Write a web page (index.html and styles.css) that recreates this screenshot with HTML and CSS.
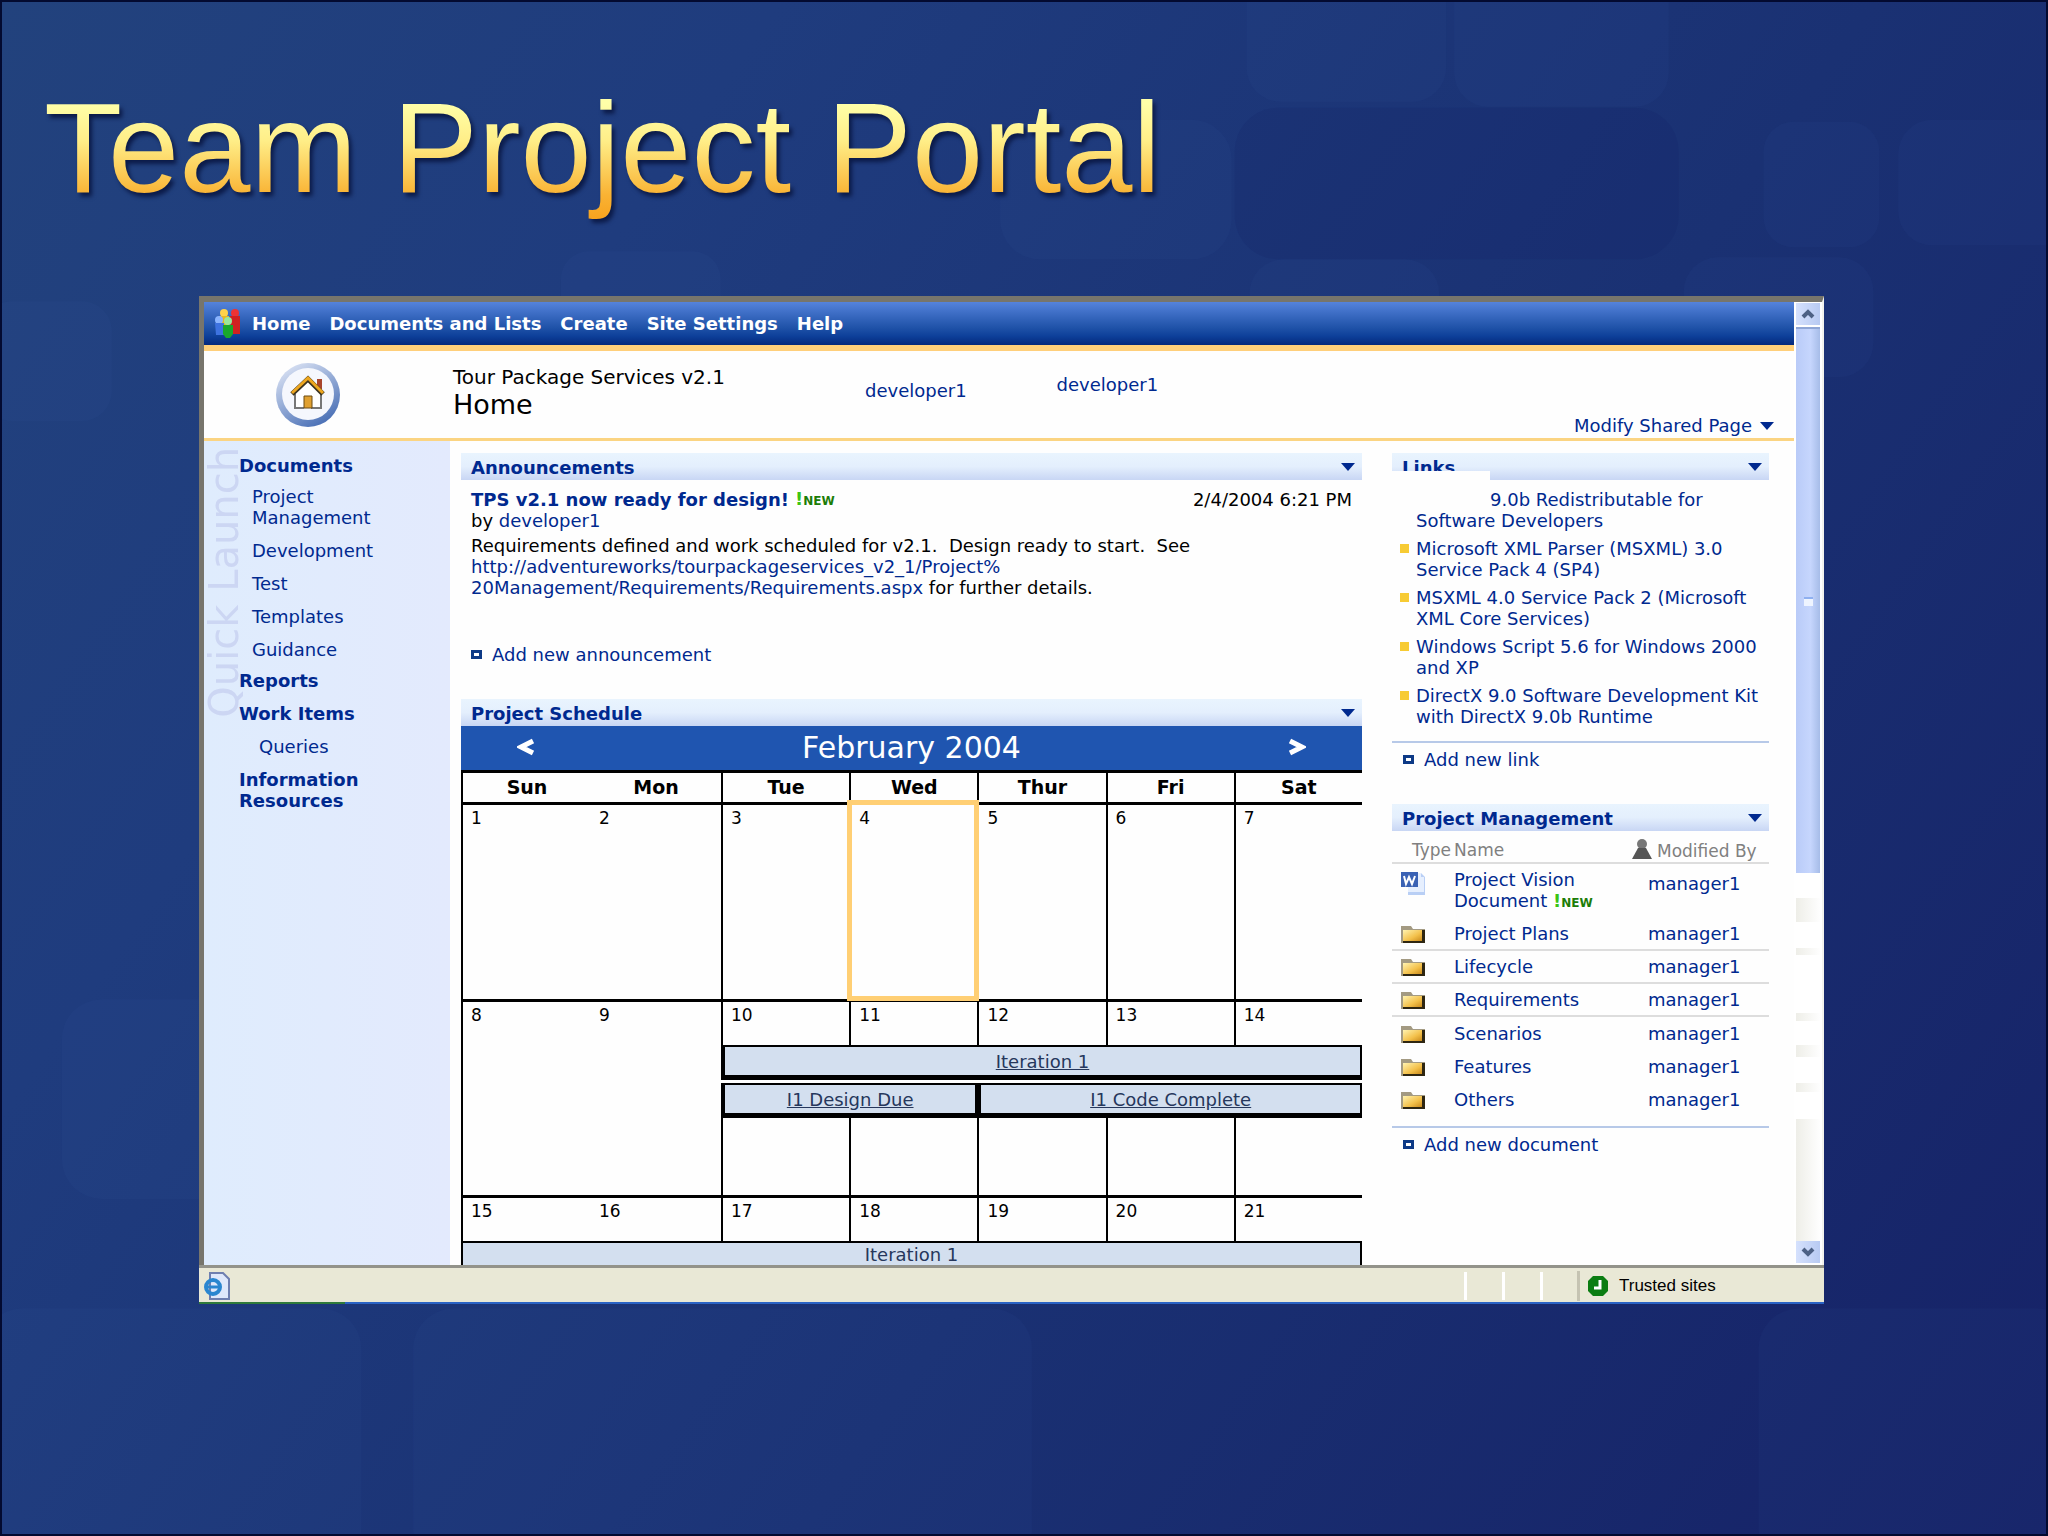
FILE: index.html
```html
<!DOCTYPE html>
<html lang="en">
<head>
<meta charset="utf-8">
<title>Team Project Portal</title>
<link rel="stylesheet" href="styles.css">
</head>
<body>
<svg width="0" height="0" class="defs" aria-hidden="true">
  <defs>
    <linearGradient id="fold" x1="0" y1="0" x2="1" y2="1"><stop offset="0" stop-color="#fff3b0"/><stop offset=".6" stop-color="#f3c04a"/><stop offset="1" stop-color="#c98a1c"/></linearGradient>
    <symbol id="folder" viewBox="0 0 24 18">
      <path d="M0 1h10l2 3h12v14H0z" fill="#a39a82"/><path d="M24 5v13H2v-2h19V5z" fill="#2e2612"/><path d="M2 5h19v11H2z" fill="url(#fold)"/>
    </symbol>
  </defs>
</svg>
<svg class="backdrop" viewBox="0 0 2048 1536" preserveAspectRatio="none" aria-hidden="true">
  <g fill="#4a6fc0" fill-opacity=".05">
    <rect x="1247" y="-60" width="200" height="160" rx="34"/><rect x="1455" y="-60" width="215" height="165" rx="34"/>
    <rect x="1000" y="118" width="232" height="140" rx="40"/>
    <rect x="1765" y="120" width="116" height="126" rx="30"/><rect x="1900" y="118" width="190" height="126" rx="34"/>
    <rect x="560" y="250" width="160" height="90" rx="28"/><rect x="1250" y="258" width="190" height="120" rx="34"/>
    <rect x="1685" y="256" width="190" height="120" rx="34"/>
    <rect x="-20" y="300" width="130" height="120" rx="30"/><rect x="60" y="1000" width="180" height="200" rx="40"/>
    <rect x="-20" y="1310" width="380" height="260" rx="40"/><rect x="412" y="1310" width="620" height="260" rx="40"/>
    <rect x="1760" y="1310" width="320" height="260" rx="40"/>
  </g>
  <rect x="1235" y="106" width="445" height="152" rx="44" fill="#101f66" fill-opacity=".16"/>
</svg>
<main class="slide">
  <h1 class="title">Team Project Portal</h1>
  <section class="browser">
    <div class="viewport">
      <div class="page">
        <nav class="topnav">
          <svg class="people" viewBox="0 0 26 30"><circle cx="9" cy="5" r="4" fill="#ffd24a"/><circle cx="20" cy="5" r="4" fill="#e33"/><path d="M4 8h10v12H4z" fill="#e8b820"/><path d="M15 8h10v18h-9z" fill="#d02020"/><circle cx="4" cy="12" r="4" fill="#8ab4ff"/><path d="M0 15h9v12H1z" fill="#3d72e0"/><circle cx="13" cy="13" r="4" fill="#9be89b"/><path d="M8 17h10v9l-3 4h-4l-3-4z" fill="#19a82c"/></svg>
          <a href="#">Home</a><a href="#">Documents and Lists</a><a href="#">Create</a><a href="#">Site Settings</a><a href="#">Help</a>
        </nav>
        <header class="banner">
          <svg class="home" viewBox="0 0 66 66"><defs><linearGradient id="ring" x1="0" y1="0" x2=".6" y2="1"><stop offset="0" stop-color="#e9eefa"/><stop offset="1" stop-color="#4f74b8"/></linearGradient></defs><circle cx="33" cy="33" r="32" fill="url(#ring)"/><circle cx="33" cy="32" r="26" fill="#f5f7fd"/><path d="M42 17h5v10h-5z" fill="#a8442c"/><path d="M20 31 33 19l13 12v15H20z" fill="#fff"/><path d="M20 32v14h9M46 32v14H36" fill="none" stroke="#777" stroke-width="2"/><path d="M17 32 33 17l15 15" fill="none" stroke="#3d3420" stroke-width="5"/><path d="M17 31 33 16l15 15" fill="none" stroke="#eda61f" stroke-width="3"/><path d="M29 34h8v12h-8z" fill="#e0a030" stroke="#6b4a12"/></svg>
          <div class="site"><p class="sitename">Tour Package Services v2.1</p><h2 class="pagename">Home</h2></div>
          <a class="dev1" href="#">developer1</a><a class="dev2" href="#">developer1</a>
          <a class="modify" href="#">Modify Shared Page <i class="caret"></i></a>
        </header>
        <div class="columns">
          <aside class="side">
            <p class="quick">Quick Launch</p>
            <ul class="launch">
              <li class="top"><a href="#">Documents</a></li>
              <li class="sub first"><a href="#">Project<br>Management</a></li>
              <li class="sub"><a href="#">Development</a></li>
              <li class="sub"><a href="#">Test</a></li>
              <li class="sub"><a href="#">Templates</a></li>
              <li class="sub last"><a href="#">Guidance</a></li>
              <li class="top"><a href="#">Reports</a></li>
              <li class="top"><a href="#">Work Items</a></li>
              <li class="sub deep"><a href="#">Queries</a></li>
              <li class="top"><a href="#">Information<br>Resources</a></li>
            </ul>
          </aside>
          <div class="center">
            <section class="news">
              <h3 class="bar">Announcements <i class="caret"></i></h3>
              <div class="newsbody">
                <p class="headline"><a href="#">TPS v2.1 now ready for design!</a><span class="new"><b>!</b>NEW</span><time>2/4/2004 6:21 PM</time></p>
                <p class="by">by <a href="#">developer1</a></p>
                <p>Requirements defined and work scheduled for v2.1.&nbsp; Design ready to start.&nbsp; See<br><a href="#">http://adventureworks/tourpackageservices_v2_1/Project%<br>20Management/Requirements/Requirements.aspx</a> for further details.</p>
                <a class="add" href="#"><i class="plus"></i>Add new announcement</a>
              </div>
            </section>
            <section>
              <h3 class="bar">Project Schedule <i class="caret"></i></h3>
              <div class="month"><button type="button" aria-label="Previous month"><svg viewBox="0 0 18 18"><path d="M16 3 4 9l12 6" fill="none" stroke="#fff" stroke-width="5"/></svg></button><span>February 2004</span><button type="button" aria-label="Next month"><svg viewBox="0 0 18 18"><path d="M2 3 14 9 2 15" fill="none" stroke="#fff" stroke-width="5"/></svg></button></div>
              <table class="cal">
                <colgroup><col class="weekstart"><col class="weekstart"><col span="5"></colgroup>
                <thead><tr><th>Sun</th><th>Mon</th><th>Tue</th><th>Wed</th><th>Thur</th><th>Fri</th><th>Sat</th></tr></thead>
                <tbody>
                  <tr class="week tall"><td>1</td><td>2</td><td>3</td><td class="today">4</td><td>5</td><td>6</td><td>7</td></tr>
                  <tr class="week"><td>8</td><td>9</td><td>10</td><td>11</td><td>12</td><td>13</td><td>14</td></tr>
                  <tr class="events"><td></td><td></td><td colspan="5" class="ev"><a href="#">Iteration 1</a></td></tr>
                  <tr class="events second"><td></td><td></td><td colspan="2" class="ev"><a href="#">I1 Design Due</a></td><td colspan="3" class="ev"><a href="#">I1 Code Complete</a></td></tr>
                  <tr class="filler"><td></td><td></td><td></td><td></td><td></td><td></td><td></td></tr>
                  <tr class="week"><td>15</td><td>16</td><td>17</td><td>18</td><td>19</td><td>20</td><td>21</td></tr>
                  <tr class="events"><td colspan="7" class="ev whole"><a href="#">Iteration 1</a></td></tr>
                </tbody>
              </table>
            </section>
          </div>
          <div class="right">
            <section class="linkbox">
              <h3 class="bar notch">Links <i class="caret"></i></h3>
              <ul class="links">
                <li class="cut"><a href="#">9.0b Redistributable for<br>Software Developers</a></li>
                <li><a href="#">Microsoft XML Parser (MSXML) 3.0<br>Service Pack 4 (SP4)</a></li>
                <li><a href="#">MSXML 4.0 Service Pack 2 (Microsoft<br>XML Core Services)</a></li>
                <li><a href="#">Windows Script 5.6 for Windows 2000<br>and XP</a></li>
                <li><a href="#">DirectX 9.0 Software Development Kit<br>with DirectX 9.0b Runtime</a></li>
              </ul>
              <a class="add ruled" href="#"><i class="plus"></i>Add new link</a>
            </section>
            <section>
              <h3 class="bar">Project Management <i class="caret"></i></h3>
              <table class="docs">
                <thead><tr><th>Type</th><th>Name</th><th><svg class="person" viewBox="0 0 20 20"><circle cx="10" cy="5" r="5" fill="#777"/><path d="M6 9h8l6 11H0z" fill="#555"/></svg>Modified By</th></tr></thead>
                <tbody>
                  <tr class="doc"><td><svg viewBox="0 0 24 24"><path d="M7 1h13l4 4v18H7z" fill="#b9cff5"/><path d="M7 1h13v4h3v15H7z" fill="#e6effe"/><path d="M0 0h17v15H0z" fill="#3a62b4"/><path d="M3 4l2 8 3-7 3 7 3-8" fill="none" stroke="#fff" stroke-width="2"/></svg></td><td><a href="#">Project Vision<br>Document</a> <span class="new"><b>!</b>NEW</span></td><td><a href="#">manager1</a></td></tr>
                  <tr class="line"><td><svg><use href="#folder"/></svg></td><td><a href="#">Project Plans</a></td><td><a href="#">manager1</a></td></tr>
                  <tr class="line"><td><svg><use href="#folder"/></svg></td><td><a href="#">Lifecycle</a></td><td><a href="#">manager1</a></td></tr>
                  <tr class="line"><td><svg><use href="#folder"/></svg></td><td><a href="#">Requirements</a></td><td><a href="#">manager1</a></td></tr>
                  <tr><td><svg><use href="#folder"/></svg></td><td><a href="#">Scenarios</a></td><td><a href="#">manager1</a></td></tr>
                  <tr><td><svg><use href="#folder"/></svg></td><td><a href="#">Features</a></td><td><a href="#">manager1</a></td></tr>
                  <tr><td><svg><use href="#folder"/></svg></td><td><a href="#">Others</a></td><td><a href="#">manager1</a></td></tr>
                </tbody>
              </table>
              <a class="add ruled" href="#"><i class="plus"></i>Add new document</a>
            </section>
          </div>
        </div>
      </div>
      <div class="scroll">
        <button type="button" class="arrow" aria-label="Scroll up"><svg viewBox="0 0 14 10"><path d="M2 8 7 3l5 5" fill="none" stroke="#4d6185" stroke-width="4"/></svg></button>
        <div class="thumb"><i></i></div>
        <div class="track"></div>
        <button type="button" class="arrow" aria-label="Scroll down"><svg viewBox="0 0 14 10"><path d="M2 2l5 5 5-5" fill="none" stroke="#4d6185" stroke-width="4"/></svg></button>
      </div>
    </div>
    <footer class="status">
      <svg class="ie" viewBox="0 0 26 28"><path d="M6 1h13l6 6v20H6z" fill="#dfe8fb" stroke="#6f7fb0" stroke-width="2"/><circle cx="9" cy="15" r="7" fill="none" stroke="#2a86d0" stroke-width="4"/><path d="M4 15h11" stroke="#2a86d0" stroke-width="3"/></svg>
      <span class="panes"><i></i><i></i><i></i></span>
      <span class="zone"><svg viewBox="0 0 20 20"><path d="M5 0h10l5 5v10l-5 5H5l-5-5V5z" fill="#0b7d12"/><path d="M12 4v8H6" fill="none" stroke="#fff" stroke-width="3"/></svg>Trusted sites</span>
    </footer>
    <div class="edge"></div>
  </section>
</main>
</body>
</html>
```
FILE: styles.css
```css
* { box-sizing: border-box; }
body {
  margin: 0;
  font: 18px/21px "DejaVu Sans", Verdana, sans-serif;
  color: #000;
  background: linear-gradient(125deg, #22427d 0%, #1f3c7e 25%, #1a3173 60%, #162267 100%);
}
h1, h2, h3, p, ul { margin: 0; padding: 0; font-size: inherit; font-weight: normal; }
ul { list-style: none; }
a { color: #00298f; text-decoration: none; }
button { padding: 0; border: 0; background: none; }
svg { display: block; }
.defs { position: absolute; }
.backdrop { position: absolute; inset: 0; width: 100%; height: 100%; border: 2px solid #030a30; }

.slide {
  position: relative;
  display: flex;
  flex-direction: column;
  height: 100vh;
  padding: 74px 224px 232px 199px;
}
.title {
  flex: none;
  height: 222px;
  margin-left: -155px;
  white-space: nowrap;
  font: 128px/148px "Liberation Sans", Arial, sans-serif;
  color: transparent;
  background: linear-gradient(#ffffa8 20%, #ffee88 45%, #f9b233 82%, #f7a11c) 0 0 / 100% 148px no-repeat;
  -webkit-background-clip: text;
  background-clip: text;
  filter: drop-shadow(3px 4px 2px #0b1a48);
}

.browser {
  flex: 1;
  min-height: 0;
  display: flex;
  flex-direction: column;
}
.edge { height: 2px; background: linear-gradient(90deg, #2f7a3a 9%, #2a63c4 9%); }
.viewport {
  flex: 1;
  min-height: 0;
  display: flex;
  background: #fefefe;
  border: solid #77756c;
  border-width: 6px 2px 0 5px;
  border-right-color: #f3f3ee;
}
.page { flex: 1; min-width: 0; overflow: hidden; }

.topnav {
  display: flex;
  align-items: center;
  gap: 19px;
  height: 43px;
  padding: 0 0 1px 11px;
  background: linear-gradient(#5583dc, #3566bd 35%, #1f52a8 60%, #0d3f99 80%, #04287c);
}
.topnav a { color: #fff; font-weight: bold; }
.people { width: 26px; height: 30px; margin-right: -8px; }

.banner {
  display: flex;
  height: 96px;
  border-top: 6px solid #ffcf7a;
  border-bottom: 3px solid #fbd482;
}
.home { width: 66px; height: 66px; margin: 11px 0 0 71px; }
.site { width: 412px; margin-left: 112px; padding-top: 16px; }
.sitename { font-size: 20px; }
.pagename { font-size: 27px; line-height: 34px; }
.dev1 { margin-top: 29px; }
.dev2 { margin: 23px 0 0 90px; }
.modify { margin: 62px 20px 0 auto; display: flex; align-items: center; gap: 8px; }
.caret { width: 0; height: 0; border: 7px solid transparent; border-top: 8px solid #00298f; border-bottom: 0; }

.columns { display: flex; align-items: stretch; }
.side {
  flex: none;
  width: 246px;
  min-height: 830px;
  display: flex;
  align-items: flex-start;
  background: linear-gradient(90deg, #dfecfd, #e3eafd);
}
.quick {
  writing-mode: vertical-rl;
  rotate: 180deg;
  width: 40px;
  margin: 6px -5px 0 0;
  font-size: 40px;
  line-height: 40px;
  color: #ccd6f3;
}
.launch { padding-top: 14px; }
.top { font-weight: bold; margin-bottom: 12px; }
.sub { padding-left: 13px; margin-bottom: 12px; }
.sub.first { margin-top: -2px; }
.sub.last { margin-bottom: 10px; }
.sub.deep { padding-left: 20px; }

.center { flex: 1; min-width: 0; padding: 12px 0 0 11px; }
.right { flex: none; width: 377px; margin: 12px 25px 0 30px; }
.bar {
  display: flex;
  align-items: center;
  justify-content: space-between;
  height: 27px;
  padding: 1px 7px 0 10px;
  font-weight: bold;
  color: #00298f;
  background: linear-gradient(#e9f4fe, #e4effd 50%, #c8d6f4);
}
.news { height: 246px; }
.newsbody { display: flex; flex-direction: column; padding: 9px 10px 0; }
.headline { display: flex; gap: 6px; height: 21px; font-weight: bold; }
.headline time { margin-left: auto; font-weight: normal; }
.new { color: #1c7d07; font-size: 12px; font-weight: bold; line-height: 20px; }
.new b { color: #3cc413; font-size: 18px; }
.by { margin-bottom: 4px; }
.add { display: flex; align-items: center; gap: 10px; }
.newsbody .add { margin-top: 46px; }
.plus { width: 11px; height: 9px; border: 3px solid #0d3a86; }

.month {
  display: flex;
  align-items: center;
  justify-content: space-between;
  height: 44px;
  padding: 0 56px 2px;
  font-size: 30px;
  color: #fff;
  background: #1f55b0;
}
.month svg { width: 18px; height: 18px; }
.cal { width: 100%; table-layout: fixed; border-spacing: 0; border-top: 3px solid #000; }
.cal th { height: 29px; padding: 0; font-size: 19px; }
.weekstart { width: 130px; }
.cal th, .cal td { border-left: 2px solid #000; }
.cal tr > :nth-child(2):not(.ev) { border-left: 0; }
.cal td { padding: 3px 0 0 8px; vertical-align: top; font-size: 17px; }
.cal .week td { height: 46px; border-top: 3px solid #000; }
.cal .tall td { height: 197px; }
.cal .today { outline: 5px solid #ffcf74; outline-offset: -3px; }
.cal .filler td { height: 77px; }
.cal td.ev { padding: 0 0 3px; border-left: 0; }
.cal .second td.ev { padding: 0; }
.ev a {
  display: block;
  height: 35px;
  border: 2px solid #000;
  border-width: 2px 2px 5px 4px;
  background: #d3dfef;
  color: #26375c;
  font-size: 18px;
  line-height: 30px;
  text-align: center;
  text-decoration: underline;
}
.whole a { border-left-width: 2px; line-height: 24px; text-decoration: none; }

.linkbox { height: 351px; }
.notch { position: relative; }
.notch::after { content: ""; position: absolute; left: 0; bottom: 0; width: 98px; height: 9px; background: #fefefe; }
.links { padding: 9px 0 0 24px; }
.links li { position: relative; margin-bottom: 7px; white-space: nowrap; }
.links li::before { content: ""; position: absolute; left: -16px; top: 6px; width: 9px; height: 9px; background: #f7cb34; }
.links .cut::before { display: none; }
.links .cut { text-indent: 74px; }
.add.ruled { padding: 6px 11px 0; border-top: 2px solid #b7c9e8; }
.links + .ruled { margin-top: 14px; }

.docs { width: 100%; border-spacing: 0; }
.docs th { height: 32px; padding: 8px 0 0; border-bottom: 2px solid #ddd; color: #808080; font-weight: normal; font-size: 17px; text-align: left; white-space: nowrap; }
.docs th:first-child { width: 62px; padding-left: 20px; }
.docs th:last-child { width: 137px; }
.docs td:last-child { padding-left: 16px; }
.person { display: inline-block; width: 20px; height: 20px; margin-right: 5px; vertical-align: -2px; }
.docs td { height: 33px; padding: 0; white-space: nowrap; }
.docs td:first-child { padding-left: 9px; }
.docs td svg { width: 24px; height: 18px; }
.docs .doc td { height: 54px; }
.docs .doc td:last-child { padding-bottom: 16px; }
.docs .doc td svg { height: 24px; margin-bottom: 14px; }
.docs .line td { border-bottom: 2px solid #ddd; }
.docs + .ruled { margin-top: 10px; }

.scroll { width: 28px; display: flex; flex-direction: column; padding: 1px 2px 2px; background: #fff; }
.arrow { display: grid; place-items: center; height: 22px; background: linear-gradient(90deg, #d5e1fd, #b8caf2); }
.arrow svg { width: 14px; height: 10px; }
.thumb { display: grid; place-items: center; height: 546px; margin-top: 2px; border-top: 2px solid #8fa6d6; background: linear-gradient(90deg, #b9cbf8, #c6d6fd 60%, #a6bce8); }
.thumb i { width: 9px; height: 9px; background: #eef4ff; border-top: 2px solid #8fb0f0; }
.track {
  flex: 1;
  background:
    linear-gradient(#fff 25px, #fff0 25px 49px, #fff 49px 75px, #fff0 75px 82px, #fff 82px 140px, #fff0 140px 148px, #fff 148px 172px, #fff0 172px 184px, #fff 184px 210px, #fff0 210px 219px, #fff 219px 246px, #fff0 246px),
    linear-gradient(90deg, #eeeee8, #fefefe);
}

.status {
  display: flex;
  align-items: stretch;
  height: 37px;
  border-top: 3px solid #93938a;
  background: #e9e8d6;
  font: 17px/34px "Liberation Sans", Arial, sans-serif;
}
.ie { width: 26px; height: 28px; margin: 4px 0 0 5px; }
.panes { margin-left: auto; display: flex; gap: 35px; padding: 4px 34px 2px 0; }
.panes i { width: 3px; background: #fff; }
.zone { display: flex; align-items: center; gap: 11px; width: 247px; margin: 3px 0 1px; padding-left: 8px; border-left: 3px solid #c5c3b2; }
.zone svg { width: 20px; height: 20px; }
```
